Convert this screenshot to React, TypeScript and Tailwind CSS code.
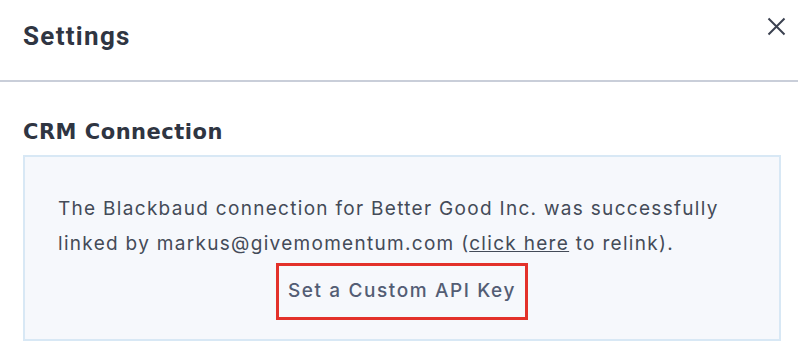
import React from "react";

const App: React.FC = () => {
  return (
    <div className="w-[798px] h-[352px] bg-white overflow-hidden font-['Roboto',sans-serif]">
      <div className="h-[82px] flex items-start justify-between border-b-2 border-[#c9ced9] pl-[23px] pr-[12px]">
        <h2 className="mt-[19px] text-[26px] leading-[34px] font-bold tracking-[1.3px] text-[#2f3542]">
          Settings
        </h2>
        <button className="mt-[17px] text-[#3b4150]">
          <svg width="19" height="19" viewBox="0 0 19 19" fill="none">
            <path d="M1.5 1.5L17.5 17.5M17.5 1.5L1.5 17.5" stroke="currentColor" strokeWidth="2" />
          </svg>
        </button>
      </div>
      <div className="px-[23px] pt-[37px]">
        <h3 className="text-[21px] leading-[27px] font-bold tracking-[0.5px] text-[#2f3542] font-['DejaVu_Sans',sans-serif]">
          CRM Connection
        </h3>
        <div className="mt-[9px] h-[186px] w-[758px] border-2 border-[#d8e8f5] bg-[#f6f8fc] px-[33px] pt-[34px]">
          <p className="text-[19px] leading-[35px] tracking-[1.3px] text-[#444b58] font-['Inter',sans-serif]">
            The Blackbaud connection for Better Good Inc. was successfully
            linked by markus@givemomentum.com (<span className="underline">click here</span> to relink).
          </p>
          <div className="flex justify-center mt-[2px]">
            <button className="border-[3px] border-[#e3312a] w-[252px] h-[57px] text-[19px] font-medium tracking-[1.6px] text-[#535d74] font-['Inter',sans-serif]">
              Set a Custom API Key
            </button>
          </div>
        </div>
      </div>
    </div>
  );
};

export default App;
